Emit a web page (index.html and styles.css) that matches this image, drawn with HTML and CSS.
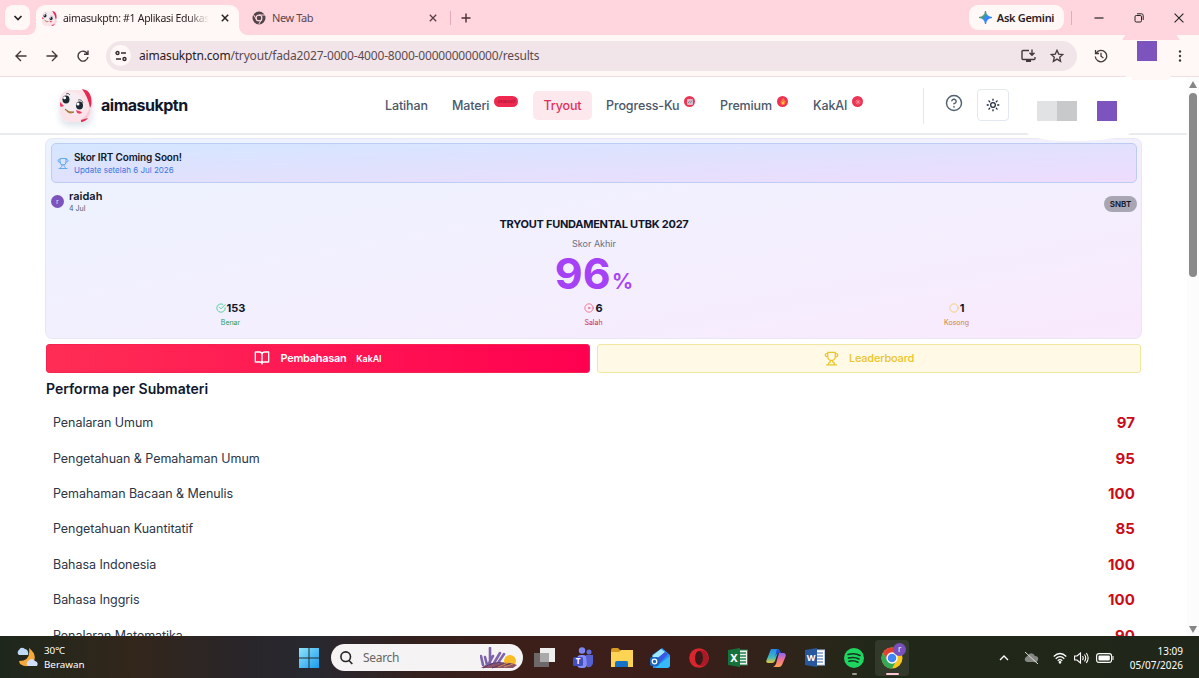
FILE: index.html
```html
<!DOCTYPE html>
<html lang="id">
<head>
    <meta charset="UTF-8">
    <meta name="viewport" content="width=device-width, initial-scale=1.0">
    <title>aimasukptn: #1 Aplikasi Edukasi</title>
    <link rel="stylesheet" href="styles.css">
</head>
<body>
    <svg class="defs" width="0" height="0">
        <defs>
            <symbol id="mascot" viewBox="0 0 32 33">
                <rect x="0" y="1" width="32" height="32" rx="9" fill="#fbe3ea"/>
                <path d="M3 6Q9 0 16 4Q25 8 24 20Q20 28 10 24Q1 20 3 6Z" fill="#f6edf3"/>
                <path d="M22 0Q32 1 31.500 15Q31 17 30 19Q28 8 22 0Z" fill="#e42b54"/>
                <path d="M30 18Q31 29 22 33L21 30Q27 28 30 18Z" fill="#f8c9d6"/>
                <path d="M21 31L28 29Q25 33 21 33Z" fill="#df2e58"/>
                <path d="M0 13L4 17L1 18Q-1 16 0 13Z" fill="#ee3f66"/>
                <path d="M16 21L22 23Q21 26 17 24Z" fill="#ee3f66"/>
                <ellipse cx="6" cy="10.500" rx="3.500" ry="4" fill="#1d2730"/>
                <ellipse cx="19.500" cy="16.500" rx="3.500" ry="4" fill="#1d2730"/>
                <circle cx="4.600" cy="8.800" r="1.500" fill="#fff"/>
                <circle cx="18" cy="15" r="1.500" fill="#fff"/>
                <path d="M6 5Q8 3 10 6M18 11Q22 10 23 14" fill="none" stroke="#444" stroke-width=".8"/>
                <path d="M5 20Q9 24 14 23Q9 26 5 20Z" fill="#dca63c" stroke="#8a672c" stroke-width=".8"/>
            </symbol>
            <symbol id="trophy" viewBox="0 0 24 24">
                <path d="M6 9H4.500a2.500 2.500 0 0 1 0-5H6M18 9h1.500a2.500 2.500 0 0 0 0-5H18M4 22h16M10 14.660V17c0 .55-.47.98-.97 1.210C7.850 18.750 7 20.240 7 22M14 14.660V17c0 .55.47.98.97 1.210C16.150 18.750 17 20.240 17 22M18 2H6v7a6 6 0 0 0 12 0V2Z"/>
            </symbol>
        </defs>
    </svg>

    <div class="screen">
        <div class="tab-strip">
            <div class="tab-search">
                <svg width="10" height="8" viewBox="0 0 10 8"><path d="M1.500 2L5 5.500L8.500 2" fill="none" stroke="#2b2023" stroke-width="1.700"/></svg>
            </div>
            <div class="tab active">
                <svg class="favicon" width="15" height="15"><use href="#mascot"/></svg>
                <span class="tab-title">aimasukptn: #1 Aplikasi Edukasi</span>
                <svg class="close" width="8" height="8" viewBox="0 0 8 8"><path d="M.8.8L7.200 7.200M7.200.8L.8 7.200" stroke="#2b2023" stroke-width="1.500"/></svg>
            </div>
            <div class="tab">
                <svg class="favicon" width="14" height="14" viewBox="0 0 14 14">
                    <circle cx="7" cy="7" r="6.500" fill="#51444b"/>
                    <circle cx="7" cy="7" r="2.900" fill="#51444b" stroke="#ffd6de" stroke-width="1.200"/>
                    <path d="M7 4H13M4.400 8.500L1.500 3.600M9.600 8.500L6.700 13.300" stroke="#ffd6de" stroke-width="1"/>
                </svg>
                <span class="tab-title">New Tab</span>
                <svg class="close" width="8" height="8" viewBox="0 0 8 8"><path d="M.8.8L7.200 7.200M7.200.8L.8 7.200" stroke="#5a3f46" stroke-width="1.300"/></svg>
            </div>
            <i class="strip-line"></i>
            <svg class="new-tab" width="10" height="10" viewBox="0 0 10 10"><path d="M5 .5V9.500M.5 5H9.500" stroke="#4a3036" stroke-width="1.400"/></svg>
            <div class="gemini">
                <svg width="13" height="13" viewBox="0 0 13 13">
                    <defs><linearGradient id="gem" x1="0" y1="0" x2="1" y2="1"><stop offset="0" stop-color="#f0524b"/><stop offset=".35" stop-color="#4a9d7c"/><stop offset=".55" stop-color="#3186ff"/><stop offset="1" stop-color="#2f7cf5"/></linearGradient></defs>
                    <path d="M6.500 0Q7.200 5.800 13 6.500Q7.200 7.200 6.500 13Q5.800 7.200 0 6.500Q5.800 5.800 6.500 0Z" fill="url(#gem)" stroke="url(#gem)"/>
                </svg>
                <span>Ask Gemini</span>
            </div>
            <i class="strip-line window-line"></i>
            <div class="window-buttons">
                <svg width="10" height="10" viewBox="0 0 10 10"><path d="M.5 5H9.500" stroke="#222" stroke-width="1.200"/></svg>
                <svg width="10" height="10" viewBox="0 0 10 10" fill="none" stroke="#222"><rect x="1" y="2.500" width="6.500" height="6.500" rx="1.300"/><path d="M3 .8H7.500Q9.200.8 9.200 2.500V7"/></svg>
                <svg width="10" height="10" viewBox="0 0 10 10"><path d="M.6.6L9.400 9.400M9.400.6L.6 9.400" stroke="#222" stroke-width="1.100"/></svg>
            </div>
        </div>

        <div class="toolbar">
            <div class="nav-buttons">
                <svg width="12" height="12" viewBox="0 0 12 12"><path d="M11.500 6H1.300M6 1L1 6L6 11"/></svg>
                <svg width="12" height="12" viewBox="0 0 12 12"><path d="M.5 6H10.700M6 1L11 6L6 11"/></svg>
                <svg width="12" height="12" viewBox="0 0 12 12"><path d="M10.500 3.800A5 5 0 1 0 11 7M11 .5V4.300H7"/></svg>
            </div>
            <div class="address">
                <span class="site-info">
                    <svg width="12" height="12" viewBox="0 0 12 12" fill="none" stroke="#362a2e" stroke-width="1.400"><circle cx="2.500" cy="3" r="1.500"/><path d="M6 3H11M1 9H6"/><circle cx="9.500" cy="9" r="1.500"/></svg>
                </span>
                <span class="url"><b>aimasukptn.com</b>/tryout/fada2027-0000-4000-8000-000000000000/results</span>
                <svg class="install" width="15" height="14" viewBox="0 0 15 14" fill="none" stroke="#44383c" stroke-width="1.400"><path d="M8 1.500H2Q1 1.500 1 2.500V9.500Q1 10.500 2 10.500H13Q14 10.500 14 9.500V8M11 .5V6M8.500 3.700L11 6.200L13.500 3.700"/><path d="M5 12H10" stroke-width="2"/></svg>
                <svg class="star" width="14" height="14" viewBox="0 0 14 14" fill="none" stroke="#44383c" stroke-width="1.300"><path d="M7 1.300L8.700 5.100L12.800 5.500L9.700 8.200L10.600 12.300L7 10.100L3.400 12.300L4.300 8.200L1.200 5.500L5.300 5.100Z"/></svg>
            </div>
            <svg class="history" width="14" height="14" viewBox="0 0 14 14" fill="none" stroke="#44383c" stroke-width="1.300"><path d="M2.200 4A5.700 5.700 0 1 1 1.300 7.500M1.500 1V4.500H5M7 3.800V7.200L9.400 9"/></svg>
            <div class="profile"><i class="swatch"></i></div>
            <svg class="menu" width="4" height="12" viewBox="0 0 4 12" fill="#44383c"><circle cx="2" cy="1.500" r="1.200"/><circle cx="2" cy="6" r="1.200"/><circle cx="2" cy="10.500" r="1.200"/></svg>
        </div>

        <div class="viewport">
            <div class="page">
                <header class="site-header">
                    <svg class="logo" width="32" height="33"><use href="#mascot"/></svg>
                    <span class="brand">aimasukptn</span>
                    <nav>
                        <a class="latihan">Latihan</a>
                        <a class="materi">Materi<span class="badge wide">eksklusif</span></a>
                        <a class="tryout">Tryout</a>
                        <a class="progress">Progress-Ku<span class="badge"><svg width="6" height="6" viewBox="0 0 6 6"><rect width="6" height="6" rx="1" fill="#d9bacb"/><path d="M1 4L2.500 2.500L3.500 3.500L5 1.500" stroke="#72889a" fill="none"/></svg></span></a>
                        <a class="premium">Premium<span class="badge"><svg width="6" height="7" viewBox="0 0 6 7"><path d="M3 0Q6 2.500 5.500 5Q4.500 7 3 7Q1 7 .6 4.800Q.5 3 2 2Z" fill="#ff7a35"/><circle cx="3" cy="5" r="1.200" fill="#ffc44a"/></svg></span></a>
                        <a class="kakai">KakAI<span class="badge"><svg width="6" height="6" viewBox="0 0 6 6"><path d="M3 .3V5.700M.3 3H5.700M1.200 1.200L4.800 4.800M4.800 1.200L1.200 4.800" stroke="#ff9b9f" stroke-width=".7"/></svg></span></a>
                    </nav>
                    <i class="header-line"></i>
                    <svg class="help" width="18" height="18" viewBox="0 0 24 24" fill="none" stroke="#52606f" stroke-width="1.900"><circle cx="12" cy="12" r="10"/><path d="M9.090 9a3 3 0 0 1 5.830 1c0 2-3 3-3 3M12 16.500v1" stroke-linecap="round"/></svg>
                    <div class="theme">
                        <svg width="14" height="14" viewBox="0 0 24 24" fill="none" stroke="#1e293b" stroke-width="2.200" stroke-linecap="round"><circle cx="12" cy="12" r="4"/><path d="M12 2v2M12 20v2M4.930 4.930l1.410 1.410M17.660 17.660l1.410 1.410M2 12h2M20 12h2M6.340 17.660l-1.410 1.410M19.070 4.930l-1.410 1.410"/></svg>
                    </div>
                    <div class="account">
                        <i class="name-block"></i>
                        <i class="swatch"></i>
                    </div>
                </header>

                <main>
                    <section class="score-card">
                        <div class="notice">
                            <svg class="line-icon" width="12" height="13"><use href="#trophy"/></svg>
                            <div>
                                <h4>Skor IRT Coming Soon!</h4>
                                <p>Update setelah 6 Jul 2026</p>
                            </div>
                        </div>
                        <div class="user-row">
                            <span class="avatar">r</span>
                            <div>
                                <h4>raidah</h4>
                                <p>4 Jul</p>
                            </div>
                            <span class="tag">SNBT</span>
                        </div>
                        <h2>TRYOUT FUNDAMENTAL UTBK 2027</h2>
                        <p class="score-label">Skor Akhir</p>
                        <div class="score">96<span>%</span></div>
                        <div class="stats">
                            <div class="stat correct">
                                <strong><svg width="10" height="10" viewBox="0 0 24 24" class="line-icon"><path d="M22 11v1a10 10 0 1 1-6-9.100M22 4L12 14l-4-4"/></svg>153</strong>
                                <span>Benar</span>
                            </div>
                            <div class="stat wrong">
                                <strong><svg width="10" height="10" viewBox="0 0 24 24" class="line-icon"><circle cx="12" cy="12" r="10"/><circle cx="12" cy="12" r="2"/></svg>6</strong>
                                <span>Salah</span>
                            </div>
                            <div class="stat empty">
                                <strong><svg width="10" height="10" viewBox="0 0 24 24" class="line-icon"><circle cx="12" cy="12" r="10"/></svg>1</strong>
                                <span>Kosong</span>
                            </div>
                        </div>
                    </section>

                    <div class="actions">
                        <button class="discussion">
                            <svg class="line-icon" width="16" height="16" viewBox="0 0 24 24"><path d="M12 7v14M12 7a4 4 0 0 0-4-4H2v15h7a3 3 0 0 1 3 3a3 3 0 0 1 3-3h7V3h-6a4 4 0 0 0-4 4Z"/></svg>
                            Pembahasan <small>KakAI</small>
                        </button>
                        <button class="leaderboard">
                            <svg class="line-icon" width="15" height="15"><use href="#trophy"/></svg>
                            Leaderboard
                        </button>
                    </div>

                    <h3>Performa per Submateri</h3>
                    <ul class="subjects">
                        <li><span>Penalaran Umum</span><b>97</b></li>
                        <li><span>Pengetahuan &amp; Pemahaman Umum</span><b>95</b></li>
                        <li><span>Pemahaman Bacaan &amp; Menulis</span><b>100</b></li>
                        <li><span>Pengetahuan Kuantitatif</span><b>85</b></li>
                        <li><span>Bahasa Indonesia</span><b>100</b></li>
                        <li><span>Bahasa Inggris</span><b>100</b></li>
                        <li><span>Penalaran Matematika</span><b>90</b></li>
                    </ul>
                </main>
            </div>
            <div class="scrollbar">
                <i class="arrow-up"></i>
                <i class="thumb"></i>
                <i class="arrow-down"></i>
            </div>
        </div>

        <footer class="taskbar">
            <svg class="weather" width="22" height="21" viewBox="0 0 22 21">
                <path d="M13 1Q22 8 17 16Q12 22 4 17L3 14Q15 14 13 1Z" fill="#f6a93b"/>
                <path d="M3 8A3 3 0 0 1 3 3Q5-1 9 2Q13 3 12 8Z" fill="#bfdaf6"/>
                <path d="M12 19A3 3 0 0 1 12 14Q16 10 19 14Q23 15 21 19Z" fill="#d0dff5"/>
            </svg>
            <div class="weather-text"><span>30℃</span><span>Berawan</span></div>
            <div class="apps">
                <svg class="start" width="20" height="20" viewBox="0 0 20 20"><defs><linearGradient id="win" x2="1" y2="1"><stop stop-color="#8de4fb"/><stop offset="1" stop-color="#199bee"/></linearGradient></defs><path d="M0 0H9.500V9.500H0ZM10.500 0H20V9.500H10.500ZM0 10.500H9.500V20H0ZM10.500 10.500H20V20H10.500Z" fill="url(#win)"/></svg>
                <div class="search">
                    <svg width="13" height="14" viewBox="0 0 13 14" fill="none" stroke="#252525" stroke-width="1.600"><circle cx="5.700" cy="5.700" r="4.800"/><path d="M9 9.500L12.300 13"/></svg>
                    <span>Search</span>
                    <svg class="lavender" width="38" height="22" viewBox="0 0 38 22">
                        <circle cx="30" cy="14" r="6" fill="#f8bd26"/>
                        <path d="M1 21Q8 15 20 16Q31 15 37 18L33 21Z" fill="#8c5268"/>
                        <path d="M3 18L1 9M7 18L5 10M10 17V1M14 16L20 6M18 16L24 7M8 18L13 9" stroke="#8063ad" stroke-width="2.600" stroke-linecap="round"/>
                        <path d="M3 21Q14 14 24 16M12 21Q20 17 31 17" stroke="#573860" fill="none"/>
                        <path d="M18 20L28 16M24 20L33 17" stroke="#d08a50"/>
                    </svg>
                </div>
                <span class="app"><svg width="21" height="20" viewBox="0 0 21 20"><path d="M6 0H21V14H6Z" fill="#eee"/><path d="M0 5H15V19H0Z" fill="#777" opacity=".85"/><path d="M6 5H15V14H6Z" fill="#aaa"/></svg></span>
                <span class="app"><svg width="20" height="21" viewBox="0 0 20 21"><circle cx="9" cy="3.500" r="3.200" fill="#7c86f2"/><circle cx="16" cy="5" r="2.500" fill="#6370de"/><rect x="4" y="8" width="10" height="13" rx="4" fill="#858cf6"/><path d="M13 8H20V16Q19 21 14 20Z" fill="#5660d1"/><rect y="10" width="10" height="9" rx="1.500" fill="#4050be"/><text x="5" y="17.200" text-anchor="middle" fill="#fff" font-size="8" font-weight="700">T</text></svg></span>
                <span class="app"><svg width="22" height="20" viewBox="0 0 22 20"><path d="M0 2Q0 0 2 0H7L10 3H20Q22 3 22 5V8H0Z" fill="#d89a20"/><path d="M0 4H8L10 2H22V19H0Z" fill="#ffd353"/><path d="M4 19V15Q4 13 6 13H16Q17 13 17 15V19Z" fill="#1672c8"/></svg></span>
                <span class="app"><svg width="20" height="20" viewBox="0 0 20 20"><path d="M2 7L12 0L20 7V18Q19 20 17 20H3V8Z" fill="#2c8cf3"/><path d="M2 8L11 1L15 4L6 13Z" fill="#9ee9ff"/><path d="M5 12L15 4L18 6L8 17Z" fill="#3a58e4"/><path d="M7 18L20 8V18Q19 20 17 20H6Z" fill="#36bafa"/><rect y="9" width="9" height="9" rx="2" fill="#1767bd"/><circle cx="4.500" cy="13.500" r="2.300" fill="none" stroke="#fff" stroke-width="1.300"/></svg></span>
                <span class="app"><svg width="20" height="20" viewBox="0 0 20 20"><circle cx="10" cy="10" r="9.800" fill="#d8262f"/><path d="M7 5Q10 1 16 3Q20 7 19 14Q15 20 9 17Q15 17 14 9Q13 3 7 5Z" fill="#ab1826"/><ellipse cx="10" cy="10" rx="4" ry="7" fill="#3b1918"/></svg></span>
                <span class="app"><svg width="20" height="19" viewBox="0 0 20 19"><rect x="10" y="2" width="9.500" height="15" fill="#e9f3ee" stroke="#26804f"/><path d="M12 5H18M12 8H18M12 11H18M12 14H18" stroke="#26804f" stroke-width="1.500"/><path d="M0 2L12 0V19L0 17Z" fill="#17713d"/><text x="6" y="13.500" text-anchor="middle" fill="#fff" font-size="11" font-weight="700">X</text></svg></span>
                <span class="app"><svg width="20" height="20" viewBox="0 0 20 20"><defs><linearGradient id="copA" x1="0" x2="0" y1="0" y2="1"><stop stop-color="#248bec"/><stop offset=".6" stop-color="#41b9c0"/><stop offset="1" stop-color="#e9c536"/></linearGradient><linearGradient id="copB" x1="0" x2="0" y1="0" y2="1"><stop stop-color="#8d65f5"/><stop offset=".5" stop-color="#f27390"/><stop offset="1" stop-color="#f9a354"/></linearGradient></defs><path d="M5 1H13L9 13Q8 15 6 15H2Q-1 15 1 11Z" fill="url(#copA)"/><path d="M13 5H18Q21 6 19 10L16 17Q15 19 13 19H7Q10 18 11 12Z" fill="url(#copB)"/><path d="M11 1Q14 1 15 5H12Q10 6 9 9Z" fill="#234ccc"/></svg></span>
                <span class="app"><svg width="20" height="19" viewBox="0 0 20 19"><rect x="10" y="2" width="9.500" height="15" fill="#fff" stroke="#b8c9e6"/><path d="M12 5H18M12 8H18M12 11H18M12 14H18" stroke="#3563a6"/><path d="M0 2L12 0V19L0 17Z" fill="#28579d"/><text x="6" y="13" text-anchor="middle" fill="#fff" font-size="9" font-weight="700">W</text></svg></span>
                <span class="app running"><svg width="20" height="20" viewBox="0 0 20 20"><circle cx="10" cy="10" r="10" fill="#1ed760"/><path d="M4 6.500Q11 4.500 16 7.500M4.500 10Q10.500 8.500 15 11M5 13.200Q10 12 14 14.200" fill="none" stroke="#173320" stroke-width="1.600" stroke-linecap="round"/></svg></span>
                <span class="app chrome running">
                    <svg width="22" height="22" viewBox="0 0 22 22"><circle cx="11" cy="11" r="10.500" fill="#fbc51d"/><path d="M1.900 5.750A10.500 10.500 0 0 1 20.100 5.750H11L6.500 13.500Z" fill="#e24131"/><path d="M1.900 5.750A10.500 10.500 0 0 0 11 21.500L15.500 13.500H6.500Z" fill="#34a853"/><circle cx="11" cy="11" r="5" fill="#4285f4" stroke="#fff" stroke-width="1.400"/></svg>
                    <span class="app-badge">r</span>
                </span>
            </div>
            <div class="tray">
                <svg width="10" height="10" viewBox="0 0 10 10"><path d="M1 7L5 3L9 7" fill="none" stroke="#fff" stroke-width="1.300"/></svg>
                <svg class="cloud" width="15" height="14" viewBox="0 0 15 14"><path d="M3 11Q-1 9 2 6Q4 5 5 3Q9 1 11 5Q15 5 14 9Q13 12 10 11Z" fill="#858783"/><path d="M1 1L14 13" stroke="#ddd"/></svg>
                <svg class="wifi" width="14" height="12" viewBox="0 0 14 12" fill="none" stroke="#fff" stroke-width="1.200"><path d="M.7 4.500Q7-1.500 13.300 4.500M2.700 6.700Q7 2.500 11.300 6.700M4.700 8.700Q7 6.500 9.300 8.700"/><circle cx="7" cy="10.300" r=".8" fill="#fff"/></svg>
                <svg class="volume" width="15" height="12" viewBox="0 0 15 12" fill="none" stroke="#fff" stroke-width="1.100"><path d="M.6 4H3L6.500 1V11L3 8H.6ZM8.500 4Q10 6 8.500 8M10.500 2.500Q13 6 10.500 9.500M12.300 1Q16 6 12.300 11"/></svg>
                <svg class="battery" width="18" height="10" viewBox="0 0 18 10"><rect x=".6" y=".6" width="15" height="8.800" rx="2.500" fill="none" stroke="#fff" stroke-width="1.100"/><rect x="2.500" y="2.400" width="11.300" height="5.200" rx="1" fill="#fff"/><path d="M17 3V7" stroke="#fff"/></svg>
                <div class="clock"><span>13:09</span><span>05/07/2026</span></div>
            </div>
        </footer>
    </div>
</body>
</html>
```
FILE: styles.css
```css
:root {
    --chrome-pink: #ffd6de;
    --chrome-light: #fff8f6;
    --purple: #7d54bd;
    --dark: #10172b;
    --slate: #4a586a;
}

* {
    box-sizing: border-box;
}

body {
    margin: 0;
    font-family: Inter, "Liberation Sans", sans-serif;
    color: var(--dark);
}

h2, h3, h4, p, ul {
    margin: 0;
    padding: 0;
}

svg {
    display: block;
    flex: none;
}

i {
    display: block;
    flex: none;
}

.defs {
    position: absolute;
}

.screen {
    width: 1199px;
    height: 678px;
    display: flex;
    flex-direction: column;
    overflow: hidden;
    background: #fff;
}

/* Browser tabs */
.tab-strip {
    height: 35px;
    flex: none;
    display: flex;
    align-items: center;
    padding-left: 5px;
    background: var(--chrome-pink);
    font-family: "Noto Sans", sans-serif;
}

.tab-search {
    width: 25px;
    height: 25px;
    display: grid;
    place-items: center;
    background: var(--chrome-light);
    border-radius: 8px;
}

.tab {
    width: 203px;
    height: 30px;
    display: flex;
    align-items: center;
    padding: 0 5px 0 13px;
    color: #5b454b;
    font-size: 11px;
    letter-spacing: -0.4px;
}

.tab.active {
    position: relative;
    width: 203px;
    margin: 5px 0 0 6px;
    padding: 0 10px 4px 6px;
    background: var(--chrome-light);
    border-radius: 9px 9px 0 0;
    color: #2b2023;
}

.tab.active::before,
.tab.active::after {
    content: '';
    position: absolute;
    bottom: 0;
    width: 8px;
    height: 8px;
    background: radial-gradient(circle at 0 0, transparent 7.5px, var(--chrome-light) 8px);
}

.tab.active::before {
    left: -8px;
}

.tab.active::after {
    right: -8px;
    transform: scaleX(-1);
}

.tab-title {
    flex: 1;
    width: 0;
    margin: 0 12px 0 6px;
    overflow: hidden;
    white-space: nowrap;
}

.active .tab-title {
    font-size: 10.5px;
    letter-spacing: -0.3px;
    mask-image: linear-gradient(to right, #000 85%, transparent);
}

.strip-line {
    width: 1px;
    height: 14px;
    background: #e9aab7;
    margin-left: 8px;
}

.new-tab {
    margin-left: 10px;
}

.gemini {
    width: 95px;
    height: 25px;
    margin-left: auto;
    display: flex;
    align-items: center;
    justify-content: center;
    gap: 5px;
    background: var(--chrome-light);
    border-radius: 9px;
    font-size: 11px;
    letter-spacing: -0.3px;
    font-weight: 600;
    color: #2b2023;
    white-space: nowrap;
}

.window-line {
    margin-left: 7px;
}

.window-buttons {
    display: flex;
    gap: 30px;
    padding: 0 15px 0 22px;
}

/* Address bar */
.toolbar {
    height: 42px;
    flex: none;
    display: flex;
    align-items: center;
    background: var(--chrome-light);
    border-bottom: 1px solid #eedfe1;
    font-family: "Noto Sans", sans-serif;
}

.nav-buttons {
    display: flex;
    gap: 19px;
    padding: 0 17px 0 15px;
    fill: none;
    stroke: #44383c;
    stroke-width: 1.4;
}

.address {
    width: 971px;
    height: 30px;
    display: flex;
    align-items: center;
    padding-left: 4px;
    background: #f2e5ea;
    border-radius: 15px;
}

.site-info {
    width: 21px;
    height: 21px;
    display: grid;
    place-items: center;
    background: var(--chrome-light);
    border-radius: 50%;
}

.url {
    width: 870px;
    margin-left: 8px;
    font-size: 12px;
    letter-spacing: -0.18px;
    color: #5a4b50;
    white-space: nowrap;
}

.url b {
    font-weight: 400;
    color: #2b2023;
}

.install {
    margin-left: 12px;
}

.star {
    margin-left: 14px;
}

.history {
    margin-left: 17px;
}

.profile {
    position: relative;
    align-self: flex-start;
    width: 58px;
    height: 45px;
    margin-left: 14px;
    padding-left: 15px;
    background: linear-gradient(var(--chrome-pink) 5px, var(--chrome-light) 5px);
    clip-path: polygon(6% 0, 94% 0, 100% 5px, 100% 60%, 80% 100%, 8% 100%, 0 60%, 0 5px);
}

.swatch {
    width: 20px;
    height: 20px;
    background: var(--purple);
}

.profile .swatch {
    margin-top: 6px;
}

.menu {
    position: relative;
    margin-left: -2px;
}

/* Site */
.viewport {
    height: 559px;
    flex: none;
    display: flex;
    overflow: hidden;
}

.page {
    width: 1187px;
    height: 559px;
    overflow: hidden;
}

.site-header {
    height: 58px;
    display: flex;
    align-items: flex-start;
    padding-left: 60px;
    border-bottom: 2px solid #e9ebec;
}

.logo {
    margin-top: 12px;
    border-radius: 9px;
    box-shadow: 0 4px 7px #dce3ea;
}

.brand {
    width: 277px;
    margin: 17px 0 0 9px;
    font-size: 16px;
    font-weight: 700;
    line-height: 22px;
    letter-spacing: -0.5px;
}

nav {
    display: flex;
    height: 29px;
    margin-top: 14px;
    width: 545px;
    font-size: 12.5px;
    line-height: 30px;
    font-weight: 500;
    letter-spacing: -0.12px;
    color: var(--slate);
}

nav a {
    display: flex;
    flex: none;
    padding-left: 7px;
}

.latihan {
    width: 67px;
}

.materi {
    width: 88px;
}

.tryout {
    width: 59px;
    justify-content: center;
    padding: 0;
    margin-right: 7px;
    color: #df315c;
    background: #fde8ed;
    border-radius: 5px;
}

.progress {
    width: 114px;
}

.premium {
    width: 93px;
}

.badge {
    width: 11px;
    height: 11px;
    margin: 5px 0 0 5px;
    display: grid;
    place-items: center;
    background: #ec3554;
    border-radius: 6px;
}

.badge.wide {
    width: 24px;
    font-size: 4px;
    line-height: 11px;
    letter-spacing: 0;
    color: #a51433;
    background: #ef2850;
}

.header-line {
    width: 1px;
    height: 36px;
    margin-top: 11px;
    background: #e2e8ef;
}

.help {
    margin: 17px 0 0 21px;
}

.theme {
    width: 32px;
    height: 32px;
    margin: 12px 0 0 14px;
    display: grid;
    place-items: center;
    border: 1px solid #e2e8f0;
    border-radius: 4px;
}

.account {
    position: relative;
    width: 106px;
    height: 64px;
    margin-left: 17px;
    padding: 24px 0 0 11px;
    display: flex;
    gap: 20px;
    background: #fff;
    border-radius: 0 0 60px 40px / 0 0 10px 10px;
}

.name-block {
    width: 40px;
    height: 20px;
    background: linear-gradient(to right, #e1e2e4 50%, #c8c9cb 50%);
}

main {
    padding: 3px 45px 0;
}

.score-card {
    height: 201px;
    padding: 4px 4px 0 5px;
    background: linear-gradient(to bottom right, #ebf3fe, #f2f0fe 45%, #f5edfd 75%, #f9e9fc);
    border: 1px solid #e9e7f7;
    border-radius: 7px;
    display: flex;
    flex-direction: column;
    align-items: center;
}

.notice {
    width: 100%;
    height: 40px;
    flex: none;
    display: flex;
    align-items: center;
    gap: 5px;
    padding-left: 5px;
    background: linear-gradient(to bottom right, #d4e6ff, #e1e1fd 50%, #eedcfd);
    border: 1px solid #bdccf3;
    border-radius: 5px;
}

.line-icon {
    fill: none;
    stroke: currentColor;
    stroke-width: 2;
    stroke-linecap: round;
    stroke-linejoin: round;
}

.notice .line-icon {
    color: #64a8ef;
}

.notice h4 {
    font-size: 10px;
    line-height: 14px;
    font-weight: 600;
    letter-spacing: -0.15px;
}

.notice p {
    font-size: 8px;
    line-height: 13px;
    color: #3d76df;
}

.user-row {
    width: 100%;
    height: 31px;
    flex: none;
    display: flex;
    align-items: center;
    padding-top: 5px;
}

.avatar {
    width: 13px;
    height: 13px;
    margin-right: 5px;
    border-radius: 50%;
    background: var(--purple);
    color: #fff;
    font-size: 6px;
    line-height: 13px;
    text-align: center;
}

.user-row h4 {
    font-size: 11px;
    line-height: 15px;
    font-weight: 600;
}

.user-row p {
    font-size: 7px;
    line-height: 10px;
    color: var(--slate);
}

.tag {
    margin: 5px 0 0 auto;
    width: 33px;
    height: 16px;
    border-radius: 8px;
    background: #a8a6b3;
    font-size: 8px;
    line-height: 16px;
    font-weight: 600;
    text-align: center;
}

h2 {
    margin-top: 1px;
    font-size: 11px;
    line-height: 18px;
    font-weight: 700;
    letter-spacing: -0.27px;
}

.score-label {
    margin-top: 4px;
    font-size: 9px;
    line-height: 14px;
    color: #667085;
}

.score {
    height: 45px;
    font-size: 43px;
    line-height: 45px;
    font-weight: 700;
    color: #a642f6;
}

.score span {
    margin-left: 1px;
    font-size: 21.5px;
    font-weight: 600;
}

.stats {
    width: 100%;
    display: grid;
    grid-template-columns: repeat(3, 1fr);
    column-gap: 4px;
    padding: 4px 1px 0 0;
}

.stat {
    display: flex;
    flex-direction: column;
    align-items: center;
}

.stat strong {
    display: flex;
    align-items: center;
    gap: 1px;
    font-size: 11px;
    line-height: 16px;
    font-weight: 700;
}

.stat span {
    font-size: 7px;
    line-height: 13px;
}

.correct svg { color: #35ce8c; }
.correct span { color: #2c9956; }
.wrong svg { color: #ee6680; }
.wrong span { color: #d22c48; }
.empty svg { color: #f2ca68; }
.empty span { color: #cf853c; }

.actions {
    display: flex;
    gap: 7px;
    margin: 5px 0 0;
    padding: 0 1px;
}

.actions button {
    flex: 1;
    height: 29px;
    display: flex;
    align-items: center;
    justify-content: center;
    gap: 10px;
    padding: 0 0 1px;
    border-radius: 3px;
    font-family: inherit;
    font-size: 11px;
    letter-spacing: -0.3px;
    font-weight: 600;
}

.actions .discussion {
    color: #fff;
    background: linear-gradient(to right, #ff2d55, #ff0050);
    border: 1px solid #f52350;
}

.discussion small {
    font-size: 9px;
    letter-spacing: -0.1px;
}

.actions .leaderboard {
    font-weight: 500;
    letter-spacing: -0.2px;
    color: #eac52b;
    background: #fff9e5;
    border: 1px solid #f0e6a0;
}

h3 {
    margin: 6px 0 6px 1px;
    font-size: 14px;
    line-height: 20px;
    font-weight: 600;
}

.subjects {
    list-style: none;
}

.subjects li {
    height: 35.4px;
    display: flex;
    align-items: center;
    justify-content: space-between;
    padding: 0 7px 0 8px;
    font-size: 12.5px;
    letter-spacing: -0.05px;
    color: #2b3547;
}

.subjects b {
    font-size: 15px;
    letter-spacing: 0.1px;
    color: #cb0c18;
}

.scrollbar {
    width: 12px;
    display: flex;
    flex-direction: column;
    align-items: center;
    padding: 4px 0 3px;
    background: #fcfcfc;
}

.arrow-up,
.arrow-down {
    width: 8px;
    height: 7px;
    background: #858585;
    clip-path: polygon(50% 0, 100% 100%, 0 100%);
}

.arrow-down {
    margin-top: auto;
    transform: rotate(180deg);
}

.thumb {
    width: 8px;
    height: 184px;
    margin-top: 5px;
    border-radius: 4px;
    background: #8a8a8a;
}

/* Windows taskbar */
.taskbar {
    height: 42px;
    flex: none;
    display: flex;
    align-items: center;
    padding: 1px 16px 0;
    color: #fff;
    background: linear-gradient(to right, #1e271c, #33261b 11%, #292529 20%, #282830 26%, #34201d 35%, #3d1f1a 43%, #3a1e19 57%, #2d251a 67%, #202818 73%, #20271a);
    font-family: "Noto Sans", sans-serif;
}

.weather-text {
    width: 251px;
    margin-left: 6px;
    display: flex;
    flex-direction: column;
    font-size: 9.8px;
    line-height: 14px;
}

.apps {
    display: flex;
    align-items: center;
}

.start {
    margin: 0 12px 0 4px;
}

.search {
    width: 192px;
    height: 27px;
    display: flex;
    align-items: center;
    margin-right: 2px;
    padding: 0 5px 0 9px;
    border-radius: 14px;
    background: #f5f3f3;
    color: #666;
    font-size: 12px;
    letter-spacing: -0.3px;
}

.search span {
    margin-left: 10px;
}

.lavender {
    margin-left: auto;
}

.app {
    position: relative;
    width: 38.7px;
    height: 36px;
    display: grid;
    place-items: center;
}

.chrome {
    width: 34px;
    margin-left: 2px;
    border-radius: 4px;
    background: #333a2c;
}

.running::after {
    content: '';
    position: absolute;
    bottom: 1px;
    left: calc(50% - 2px);
    width: 5px;
    height: 2px;
    border-radius: 1px;
    background: #999c94;
}

.chrome.running::after {
    left: 11px;
    width: 13px;
    background: #ffc7d3;
}

.app-badge {
    position: absolute;
    top: 3px;
    right: 3px;
    width: 13px;
    height: 13px;
    border-radius: 50%;
    background: #7850b9;
    font-size: 8px;
    line-height: 12px;
    text-align: center;
}

.tray {
    margin-left: auto;
    display: flex;
    align-items: center;
}

.cloud {
    margin-left: 15px;
}

.wifi {
    margin-left: 14px;
}

.volume {
    margin-left: 7px;
}

.battery {
    margin-left: 7px;
}

.clock {
    width: 69px;
    display: flex;
    flex-direction: column;
    text-align: right;
    font-size: 10px;
    line-height: 14px;
}
```
